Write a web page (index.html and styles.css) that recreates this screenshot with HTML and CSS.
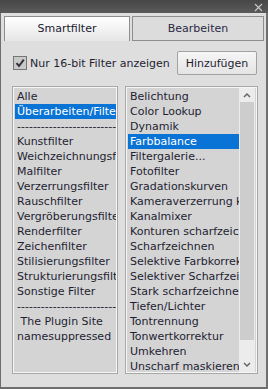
FILE: index.html
```html
<!DOCTYPE html>
<html lang="de">
<head>
  <meta charset="UTF-8" />
  <title>Smartfilter</title>
  <link rel="stylesheet" href="styles.css">
</head>
<body>

<div class="window">
  <div class="titlebar">
    <svg class="close" width="9" height="9" viewBox="0 0 9 9">
      <path d="M1 1 L8 8 M8 1 L1 8" stroke="#c8c8c8" stroke-width="1.1" fill="none"/>
    </svg>
  </div>

  <div class="panel">
    <div class="tabs">
      <div class="tab active">Smartfilter</div>
      <div class="tab">Bearbeiten</div>
    </div>

    <div class="options">
      <label class="check">
        <span class="box">
          <svg width="12" height="12" viewBox="0 0 12 12">
            <path d="M2.5 6.2 L5 9 L9.8 2.6" stroke="#333" stroke-width="2" fill="none"/>
          </svg>
        </span>
        Nur 16-bit Filter anzeigen
      </label>
      <button class="btn">Hinzufügen</button>
    </div>

    <div class="lists">
      <ul class="list left">
        <li>Alle</li>
        <li class="selected">Überarbeiten/Filter</li>
        <li>------------------------------------------</li>
        <li>Kunstfilter</li>
        <li>Weichzeichnungsfilter</li>
        <li>Malfilter</li>
        <li>Verzerrungsfilter</li>
        <li>Rauschfilter</li>
        <li>Vergröberungsfilter</li>
        <li>Renderfilter</li>
        <li>Zeichenfilter</li>
        <li>Stilisierungsfilter</li>
        <li>Strukturierungsfilter</li>
        <li>Sonstige Filter</li>
        <li>------------------------------------------</li>
        <li>&nbsp;The Plugin Site</li>
        <li>namesuppressed</li>
      </ul>

      <div class="list right">
        <ul>
          <li>Belichtung</li>
          <li>Color Lookup</li>
          <li>Dynamik</li>
          <li class="selected">Farbbalance</li>
          <li>Filtergalerie...</li>
          <li>Fotofilter</li>
          <li>Gradationskurven</li>
          <li>Kameraverzerrung korrigieren</li>
          <li>Kanalmixer</li>
          <li>Konturen scharfzeichnen</li>
          <li>Scharfzeichnen</li>
          <li>Selektive Farbkorrektur</li>
          <li>Selektiver Scharfzeichner</li>
          <li>Stark scharfzeichnen</li>
          <li>Tiefen/Lichter</li>
          <li>Tontrennung</li>
          <li>Tonwertkorrektur</li>
          <li>Umkehren</li>
          <li>Unscharf maskieren</li>
        </ul>
        <div class="scrollbar">
          <svg class="arrow" width="16" height="14" viewBox="0 0 16 14">
            <path d="M5 9 L8 6 L11 9" stroke="#666" stroke-width="1.5" fill="none"/>
          </svg>
          <div class="thumb"></div>
          <div class="track"></div>
          <svg class="arrow" width="16" height="14" viewBox="0 0 16 14">
            <path d="M5 5 L8 8 L11 5" stroke="#666" stroke-width="1.5" fill="none"/>
          </svg>
        </div>
      </div>
    </div>
  </div>
</div>

</body>
</html>
```

FILE: styles.css
```css
body {
  margin: 0;
  font-family: "DejaVu Sans", sans-serif;
  font-size: 11px;
  color: #1e1e32;
  background: #dedede;
}
.window {
  width: 268px;
  height: 389px;
  display: flex;
  flex-direction: column;
}
.titlebar {
  height: 13px;
  background: linear-gradient(#474747, #5a5a5a);
  display: flex;
  justify-content: flex-end;
  align-items: flex-start;
}
.close {
  margin: 3px 5px 0 0;
}
.panel {
  flex: 1;
  background: #dedede;
  border-left: 1px solid #6e6e6e;
  border-right: 2px solid #6e6e6e;
  border-bottom: 2px solid #6e6e6e;
}
.tabs {
  display: flex;
  gap: 2px;
  padding: 3px 0 0 3px;
}
.tab {
  height: 23px;
  line-height: 23px;
  text-align: center;
  width: 130px;
  background: #dcdcdc;
  border: 1px solid #8e8e8e;
  font-size: 11px;
  color: #2a2a44;
}
.tab.active {
  width: 124px;
  border-bottom: none;
  height: 24px;
  background: linear-gradient(#ffffff, #e6e6e6);
  color: #1a1a30;
}
.options {
  display: flex;
  justify-content: space-between;
  align-items: center;
  margin: 10px 9px 0 12px;
}
.check {
  display: flex;
  align-items: center;
  gap: 3px;
}
.box {
  width: 12px;
  height: 12px;
  border: 1px solid #767676;
  background: #c9c9c9;
  display: flex;
}
.btn {
  font-family: "DejaVu Sans", sans-serif;
  font-size: 11px;
  color: #1e1e32;
  width: 80px;
  height: 24px;
  padding: 0;
  background: linear-gradient(#f6f6f6, #e4e4e4);
  border: 1px solid #a2a2a2;
  border-radius: 2px;
}
.lists {
  display: flex;
  margin: 12px 0 0 12px;
  gap: 9px;
}
.list {
  height: 283px;
  background: #d4d4d4;
  border: 1px solid #f6f6f6;
  box-shadow: 0 0 0 1px #a8a8a8;
  padding: 1px 0 0 1px;
  overflow: hidden;
}
ul {
  list-style: none;
  margin: 0;
  padding: 0;
}
li {
  height: 15px;
  line-height: 15px;
  padding-left: 2px;
  white-space: nowrap;
  overflow: hidden;
}
li.selected {
  background: #0a74d6;
  color: #fff;
}
.left {
  width: 101px;
}
.right {
  width: 128px;
  display: flex;
}
.right ul {
  width: 111px;
  flex: none;
}
.scrollbar {
  width: 16px;
  margin-top: -1px;
  background: #ececec;
  display: flex;
  flex-direction: column;
}
.thumb {
  height: 238px;
  margin: 0 1px;
  background: #cdcdcd;
}
.track {
  flex: 1;
}
.arrow {
  flex: none;
}
```
